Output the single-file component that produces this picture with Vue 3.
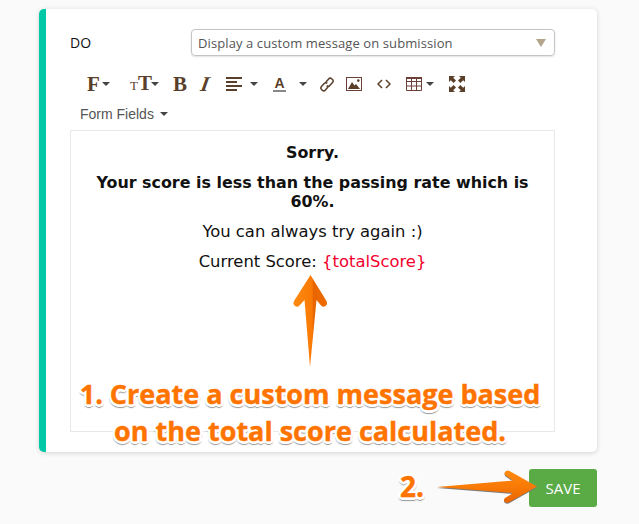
<script setup>
const lines = ['1. Create a custom message based', 'on the total score calculated.']
</script>

<template>
  <div class="page">
    <section class="card">
      <div class="row">
        <label class="do">DO</label>
        <div class="select">
          <span>Display a custom message on submission</span>
          <i class="select-caret"></i>
        </div>
      </div>

      <div class="toolbar">
        <span class="tool glyph f">F</span><i class="caret c-f"></i>
        <span class="tool size"><small>T</small>T</span><i class="caret c-t"></i>
        <span class="tool glyph b">B</span>
        <span class="tool glyph it">I</span>
        <svg class="tool ic-align" width="16" height="14" viewBox="0 0 16 14"><path d="M0 1h16M0 5h11M0 9h16M0 13h11" stroke="#5a3f2a" stroke-width="2"/></svg>
        <i class="caret c-al"></i>
        <span class="tool color">A</span>
        <i class="caret c-a"></i>
        <svg class="tool ic-link" width="16" height="17" viewBox="0 0 16 17" fill="none" stroke="#5a3f2a" stroke-width="1.5"><path d="M6.8 6.2 9.6 3a2.2 2.2 0 0 1 3.1-.2l.6.5a2.2 2.2 0 0 1 .2 3.1l-2.7 3a2.2 2.2 0 0 1-3.1.2"/><path d="M9.2 10.8 6.4 14a2.2 2.2 0 0 1-3.1.2l-.6-.5a2.2 2.2 0 0 1-.2-3.1l2.7-3a2.2 2.2 0 0 1 3.1-.2"/></svg>
        <svg class="tool ic-img" width="16" height="14" viewBox="0 0 16 14"><rect x=".5" y=".5" width="15" height="13" fill="#fff" stroke="#6a4038"/><path d="M2 12 6 5l2.5 3.5L10 7l4 5z" fill="#5a3f2a"/><circle cx="12.3" cy="3.6" r="1.3" fill="#5a3f2a"/></svg>
        <svg class="tool ic-code" width="14" height="10" viewBox="0 0 14 10" fill="none" stroke="#5a3f2a" stroke-width="1.5"><path d="M5 1 1 5l4 4M9 1l4 4-4 4"/></svg>
        <svg class="tool ic-table" width="16" height="14" viewBox="0 0 16 14" fill="none" stroke="#6a4038"><path d="M.5.5h15v13H.5zM.5 4.5h15M.5 9h15M5.5.5v13M10.5.5v13"/><path d="M0 1h16" stroke-width="2"/></svg>
        <i class="caret c-tb"></i>
        <svg class="tool ic-full" width="16" height="16" viewBox="0 0 16 16" fill="#5a3f2a"><path d="M0 0h6L4.2 1.8 7 4.6 4.6 7 1.8 4.2 0 6zM16 0v6l-1.8-1.8L11.4 7 9 4.6l2.8-2.8L10 0zM0 16v-6l1.8 1.8L4.6 9 7 11.4l-2.8 2.8L6 16zM16 16h-6l1.8-1.8L9 11.4 11.4 9l2.8 2.8L16 10z"/></svg>
      </div>

      <div class="fields">Form Fields<i class="caret c-ff"></i></div>

      <div class="editor">
        <p class="strong">Sorry.</p>
        <p class="strong">Your score is less than the passing rate which is 60%.</p>
        <p>You can always try again :)</p>
        <p>Current Score: <span class="var">{totalScore}</span></p>
      </div>
    </section>

    <div class="actions">
      <button class="save" type="button">SAVE</button>
    </div>

    <svg class="arrow-up" width="36" height="96" viewBox="0 0 36 96">
      <defs>
        <linearGradient id="gu" x1="0" x2="1" y1="0" y2="0">
          <stop offset="0" stop-color="#ff8a10"/><stop offset=".55" stop-color="#f97a05"/><stop offset=".6" stop-color="#e86400"/><stop offset="1" stop-color="#ef6c00"/>
        </linearGradient>
      </defs>
      <path d="M18.500 1 34.500 27q1.500 3-1 5-2 1.500-4 0L24.500 26 18 93 12.500 26 7 32q-2 1.500-4 0-2.500-2-1-5z" fill="url(#gu)"/>
    </svg>

    <svg class="arrow-right" width="104" height="38" viewBox="0 0 104 38">
      <defs>
        <linearGradient id="gr" x1="0" x2="0" y1="0" y2="1">
          <stop offset="0" stop-color="#ff8a10"/><stop offset=".5" stop-color="#f97a05"/><stop offset="1" stop-color="#e86400"/>
        </linearGradient>
      </defs>
      <path d="M1 19 77 12.500 69.500 7.500q-2-2.500 0-4 1.500-1.500 4-.5L101 18.500 73.500 34q-2.500 1.500-4.500 0-2-2 0-4L77 25z" fill="#7a7a7a" transform="translate(0 1)"/>
      <path d="M1 19 77 12.500 69.500 7.500q-2-2.500 0-4 1.500-1.500 4-.5L101 18.500 73.500 34q-2.500 1.500-4.500 0-2-2 0-4L77 25z" fill="url(#gr)"/>
    </svg>

    <div class="note note-1">
      <div v-for="l in lines" :key="l">{{ l }}</div>
    </div>
    <div class="note note-2">2.</div>
  </div>
</template>

<style scoped>
.page {
  position: relative;
  width: 639px;
  height: 524px;
  overflow: hidden;
  background: #fafafa;
  padding: 9px 42px 0 39px;
  box-sizing: border-box;
}
.card {
  height: 443px;
  box-sizing: border-box;
  background: #fff;
  border-left: 7px solid #01c9a7;
  border-radius: 5px;
  box-shadow: 0 1px 5px rgba(0, 0, 0, .16);
  padding: 20px 42px 0 24px;
}
.row {
  display: flex;
  align-items: center;
  height: 27px;
}
.do {
  width: 121px;
  font: 14px "Open Sans", sans-serif;
  color: #111;
  margin-top: -1px;
}
.select {
  flex: 1;
  height: 27px;
  box-sizing: border-box;
  border: 1px solid #c4c4c4;
  border-radius: 4px;
  box-shadow: 0 1px 2px rgba(0, 0, 0, .12);
  display: flex;
  align-items: center;
  justify-content: space-between;
  padding: 0 8px 0 6px;
  font: 13px "Open Sans", sans-serif;
  letter-spacing: .1px;
  color: #555;
}
.select-caret {
  width: 0;
  height: 0;
  border-left: 5.500px solid transparent;
  border-right: 5.500px solid transparent;
  border-top: 8px solid #b3a48c;
  margin-top: 1px;
}
.toolbar {
  display: flex;
  align-items: center;
  height: 24px;
  margin-top: 16px;
  padding-left: 17px;
  color: #5a3f2a;
}
.tool { flex: none; }
.glyph {
  font: bold 21px/24px "Liberation Serif", serif;
}
.f { width: 15px; }
.caret {
  flex: none;
  width: 0;
  height: 0;
  border-left: 4px solid transparent;
  border-right: 4px solid transparent;
  border-top: 4px solid #444;
}
.size {
  margin-left: 20px;
  font: bold 21px/24px "Liberation Serif", serif;
}
.size small { font-size: 13px; font-weight: 400; }
.c-t { margin-left: -1px; }
.b { margin-left: 14px; width: 13px; }
.it {
  display: inline-block;
  margin-left: 13px;
  width: 12px;
  text-align: center;
  font-style: italic;
  transform: skewX(-10deg);
}
.ic-align { margin-left: 15px; }
.c-al { margin-left: 8px; }
.color {
  margin-left: 15px;
  width: 13px;
  text-align: center;
  font: bold 14px/14px "Liberation Sans", sans-serif;
  border-bottom: 2px solid #888;
}
.c-a { margin-left: 13px; }
.ic-link { margin-left: 12px; }
.ic-img { margin-left: 11px; }
.ic-code { margin-left: 15px; }
.ic-table { margin-left: 15px; }
.c-tb { margin-left: 4px; }
.ic-full { margin-left: 15px; }
.fields {
  display: flex;
  align-items: center;
  height: 20px;
  margin: 8px 0 0 10px;
  font: 14px "Liberation Sans", sans-serif;
  color: #555;
}
.c-ff { margin-left: 6px; }
.editor {
  height: 302px;
  margin-top: 6px;
  box-sizing: border-box;
  border: 1px solid #e8e8e8;
  padding: 12px 10px 0;
  text-align: center;
  font: 16.400px/19px "DejaVu Sans", Verdana, sans-serif;
  color: #111;
}
.editor p { margin: 0 0 11px; }
.strong { font-weight: 700; font-size: 15.900px; }
.var { color: #f2002d; }
.actions {
  display: flex;
  justify-content: flex-end;
  margin-top: 17px;
}
.save {
  width: 68px;
  height: 38px;
  border: 0;
  border-radius: 3px;
  background: #5aab46;
  color: #fff;
  font: 15px "Open Sans", sans-serif;
  padding: 0;
}
.arrow-up { position: absolute; left: 292px; top: 274px; }
.arrow-right { position: absolute; left: 436px; top: 468px; }
.note {
  position: absolute;
  font: 700 27px/37px "Open Sans", sans-serif;
  color: #ff7400;
  -webkit-text-stroke: .4px #ff7400;
  text-align: center;
  white-space: nowrap;
  text-shadow:
    2.500px 0 0 #fff, -2.500px 0 0 #fff, 0 2.500px 0 #fff, 0 -2.500px 0 #fff,
    2px 2px 0 #fff, -2px 2px 0 #fff, 2px -2px 0 #fff, -2px -2px 0 #fff,
    0 3.500px 1px #999, 2px 3px 1px #bbb, -2px 3px 1px #bbb;
}
.note-1 { left: 60px; width: 500px; top: 375px; }
.note-2 { left: 400px; top: 468px; font-size: 28px; }
</style>
